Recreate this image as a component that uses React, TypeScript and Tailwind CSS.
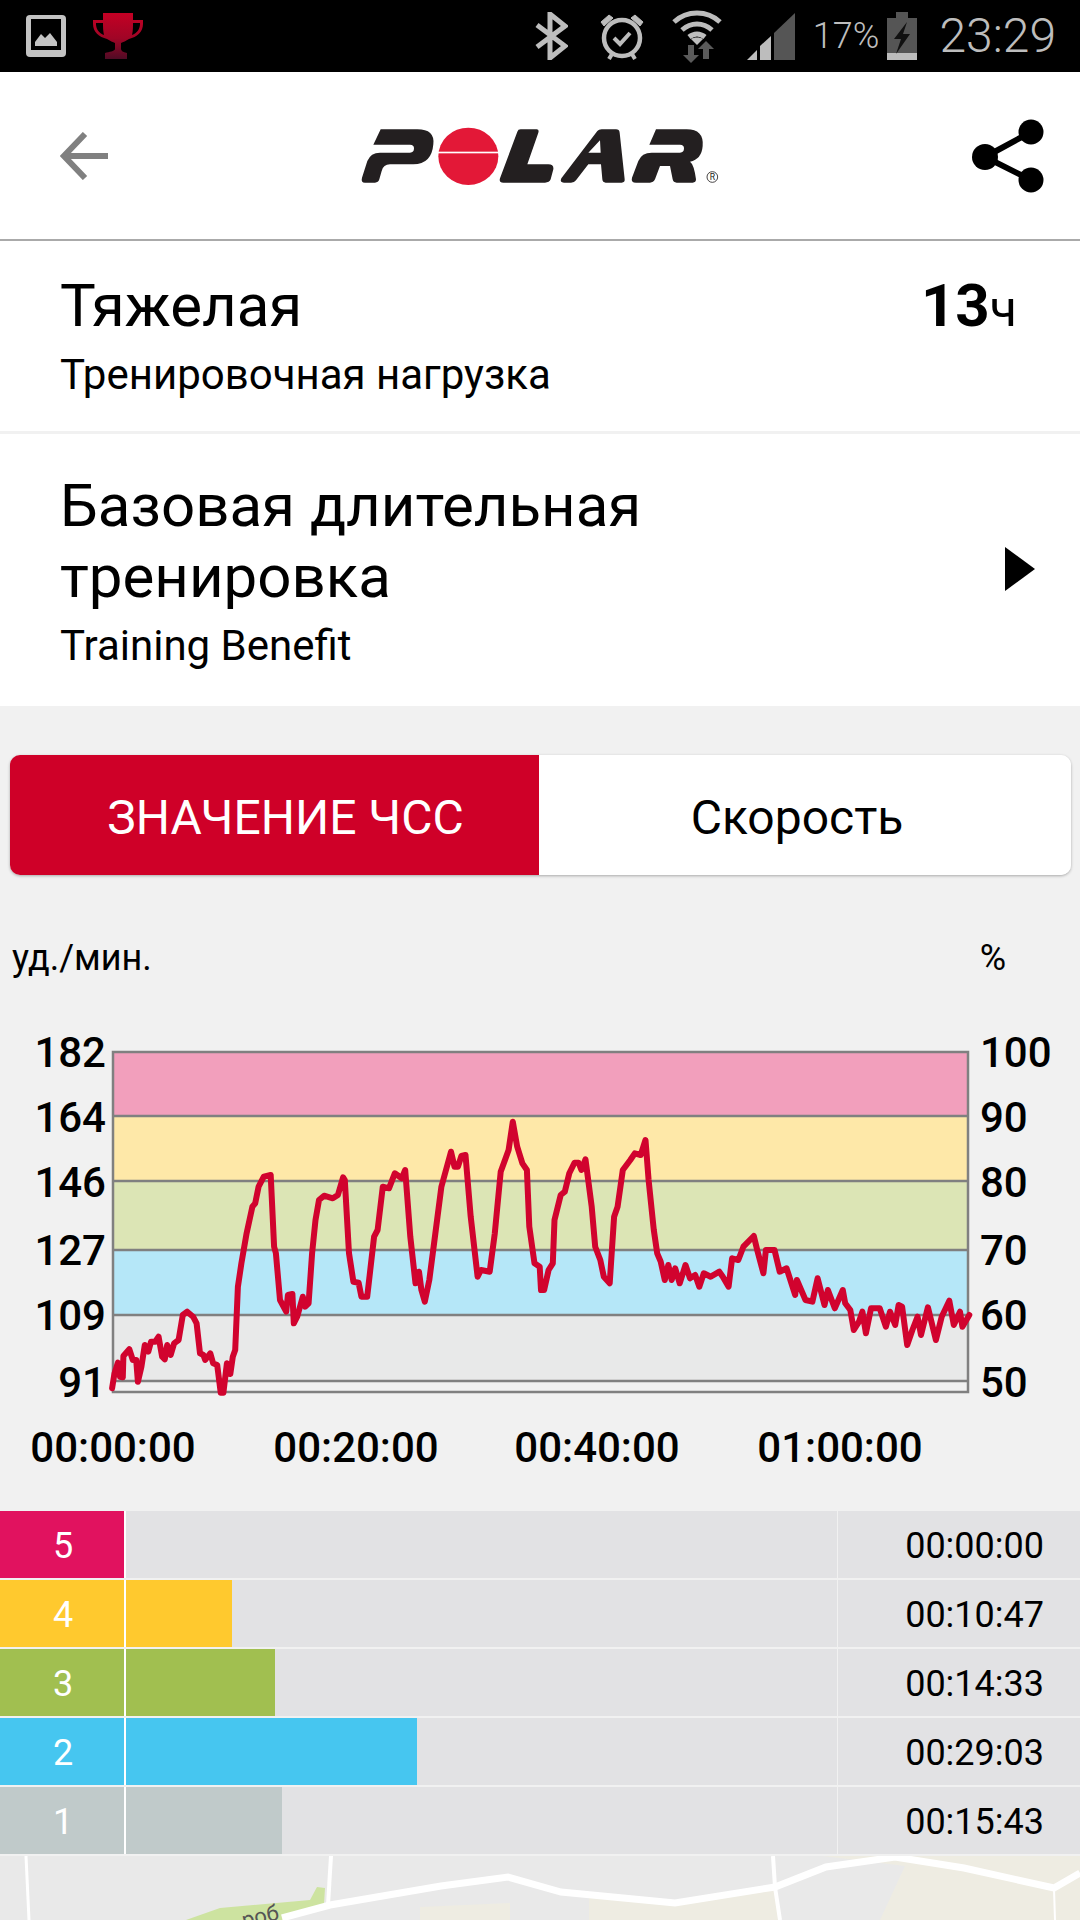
const leftTrace = [[325,1105],[332,1060],[342,1028],[348,1070],[356,1072],[358,1008],[375,988],[385,1020],[395,1020],[400,1085],[410,1040],[420,975],[430,995],[438,965],[450,965],[460,950],[470,1010],[478,1018],[485,975],[495,1005],[505,970],[518,960],[530,885],[543,875],[560,890],[570,910],[580,1000],[590,1005],[595,1020],[610,1000],[618,1030],[630,1035],[640,1118],[648,1118],[658,1030],[668,1062],[675,1010],[682,990],[690,800],[700,730],[715,640],[732,560],[740,550],[750,500],[765,470],[785,465],[795,680],[800,700],[812,840],[830,875],[835,825],[848,822],[852,910],[862,890],[878,830],[885,860],[895,850],[905,700],[915,600],[925,540],[940,527],[965,535],[980,525],[995,472],[1000,480],[1012,700],[1025,785],[1040,788],[1048,830],[1065,830],[1085,650],[1095,630],[1110,500],[1128,505],[1145,460],[1165,475],[1175,450],[1190,650],[1205,790],[1215,755],[1222,810],[1232,845],[1245,780],[1260,660],[1280,500],[1308,395],[1318,440],[1328,440],[1338,408],[1350,405],[1365,590],[1385,770],[1395,750],[1420,755],[1435,640],[1452,455],[1475,390],[1487,305],[1500,380],[1515,430],[1528,450],[1535,620],[1550,730],[1565,740]];
const rightTrace = [[3,810],[12,810],[25,750],[37,730],[42,600],[60,525],[72,515],[85,460],[100,428],[112,428],[120,450],[132,418],[150,560],[160,680],[175,720],[185,770],[202,790],[215,590],[225,560],[240,450],[262,420],[275,400],[292,405],[306,360],[315,480],[330,630],[340,700],[350,725],[362,780],[372,735],[382,780],[392,745],[405,790],[422,735],[435,775],[450,765],[462,800],[475,760],[495,770],[520,755],[530,770],[547,800],[557,715],[575,720],[590,680],[620,648],[630,690],[648,760],[655,690],[680,690],[695,755],[715,745],[740,825],[745,780],[770,840],[790,845],[805,775],[825,855],[835,810],[855,865],[878,810],[885,850],[900,870],[910,930],[925,905],[935,875],[945,940],[960,865],[985,865],[1003,920],[1015,875],[1030,915],[1040,855],[1050,860],[1065,975],[1080,930],[1095,890],[1105,945],[1125,862],[1148,960],[1165,890],[1187,842],[1200,915],[1218,875],[1225,920],[1245,885]];

const hrLine = [
  ...leftTrace.map(([x, y]) => `${(x / 2.9).toFixed(1)},${(y / 3).toFixed(1)}`),
  ...rightTrace.map(([x, y]) => `${(540 + x / 2.9).toFixed(1)},${(y / 3).toFixed(1)}`),
].join(" ");

const bands = [
  { y: 32, h: 64, fill: "#f29fbc" },
  { y: 96, h: 65, fill: "#fee8a8" },
  { y: 161, h: 69, fill: "#dce5b5" },
  { y: 230, h: 65, fill: "#b5e7f8" },
  { y: 295, h: 66, fill: "#e8e9e9" },
];
const gridLines = [96, 161, 230, 295, 361];
const bpm = [["182", 32], ["164", 97], ["146", 162], ["127", 230], ["109", 295], ["91", 362]] as const;
const pct = [["100", 32], ["90", 97], ["80", 162], ["70", 230], ["60", 295], ["50", 362]] as const;
const times = [["00:00:00", 113], ["00:20:00", 356], ["00:40:00", 597], ["01:00:00", 840]] as const;

const zones = [
  { n: 5, color: "bg-[#e1125f]", bar: "w-0", time: "00:00:00" },
  { n: 4, color: "bg-[#ffc92e]", bar: "w-[106px]", time: "00:10:47" },
  { n: 3, color: "bg-[#a1bf50]", bar: "w-[149px]", time: "00:14:33" },
  { n: 2, color: "bg-[#46c6f0]", bar: "w-[291px]", time: "00:29:03" },
  { n: 1, color: "bg-[#c0caca]", bar: "w-[156px]", time: "00:15:43" },
];

function StatusIcons() {
  return (
    <div className="flex h-[72px] items-center bg-black pl-[26px] pr-[24px]">
      {/* gallery notification */}
      <svg width="40" height="42" viewBox="0 0 40 42">
        <rect width="40" height="42" rx="4" fill="#c3c3c3" />
        <rect x="5" y="4" width="30" height="31" fill="#000" />
        <path d="M9 31V27L15 19L19 23L24 18L31 27V31Z" fill="#c3c3c3" />
      </svg>
      {/* trophy */}
      <svg className="ml-[27px]" width="50" height="46" viewBox="0 0 50 46">
        <defs>
          <linearGradient id="cup" x1="0" y1="0" x2="0" y2="1">
            <stop offset="0" stopColor="#c40024" />
            <stop offset="0.55" stopColor="#a00526" />
            <stop offset="1" stopColor="#4f0b25" />
          </linearGradient>
        </defs>
        <path
          fill="url(#cup)"
          d="M10 0H40V7H50V11C50 19 44 24 36 26C33 28 30 29 28 30V36C28 38 30 39 34 40V46H12V40C16 39 22 38 22 36V30C20 29 17 28 14 26C6 24 0 19 0 11V7H10ZM3 10V11C3 16 6 20 11 22C10 18 10 14 10 10ZM47 10H40C40 14 40 18 39 22C44 20 47 16 47 11Z"
        />
      </svg>
      <div className="flex-1" />
      {/* bluetooth */}
      <svg width="33" height="48" viewBox="0 0 33 48" fill="none" stroke="#bdbdbd" strokeWidth="5">
        <path d="M2 13L30 34L15 46V2L30 14L2 35" />
      </svg>
      {/* alarm */}
      <svg className="ml-[31px]" width="46" height="48" viewBox="0 0 46 48" fill="none" stroke="#bdbdbd">
        <circle cx="23" cy="26" r="18" strokeWidth="4.5" />
        <path d="M15 26L21 32L31 21" strokeWidth="4" />
        <path d="M2 10L10 3L14 6L5 14ZM44 10L36 3L32 6L41 14Z" fill="#bdbdbd" strokeWidth="1" />
        <path d="M10 47L13 42M36 47L33 42" strokeWidth="4" />
      </svg>
      {/* wifi with data arrows */}
      <svg className="ml-[27px]" width="50" height="54" viewBox="0 0 50 54">
        <g fill="none" stroke="#bdbdbd" strokeWidth="5">
          <path d="M2 13C15 1 35 1 48 13" />
          <path d="M10 21C19 13 31 13 40 21" />
          <path d="M17 28C22 24 28 24 33 28" />
        </g>
        <path d="M25 36L19 30C22 28 28 28 31 30Z" fill="#bdbdbd" />
        <path d="M16 36H22V46H27L19 54L11 46H16Z" fill="#5a5a5a" />
        <path d="M31 50H37V40H42L34 32L26 40H31Z" fill="#5a5a5a" />
      </svg>
      {/* signal */}
      <svg className="ml-[25px]" width="48" height="47" viewBox="0 0 48 47">
        <path d="M0 47L10 37V47Z" fill="#bdbdbd" />
        <path d="M13 47V33L24 23V47Z" fill="#bdbdbd" />
        <path d="M27 47V20L48 0V47Z" fill="#555" />
      </svg>
      <span className="ml-[18px] text-[36px] font-light leading-none text-[#bdbdbd]">17%</span>
      {/* battery */}
      <svg className="ml-[8px]" width="30" height="48" viewBox="0 0 30 48">
        <rect x="9" y="0" width="12" height="6" fill="#555" />
        <rect x="0" y="6" width="30" height="35" fill="#555" />
        <rect x="0" y="41" width="30" height="7" fill="#bdbdbd" />
        <path d="M20 10L7 27H14L9 42L23 22H16Z" fill="#111" />
      </svg>
      <span className="ml-[22px] text-[48px] font-light leading-none text-[#bdbdbd]">23:29</span>
    </div>
  );
}

function PolarLogo() {
  return (
    <svg width="400" height="90" viewBox="0 0 1200 270">
      <g fill="#231f20" fillRule="evenodd">
        <path d="M122 55H232Q285 55 280 100Q275 160 220 160H150Q130 160 125 180L118 205Q115 215 105 215H75Q62 215 66 200L82 150Q92 125 120 125H210Q222 125 222 112Q222 101 210 101H100Z" />
        <path d="M532 62Q534 55 542 55H590Q598 55 595 65L562 160H625Q642 160 640 175L632 205Q628 215 615 215H490Q476 215 480 202Z" />
        <path d="M772 60Q776 55 785 55H828Q838 55 839 65L854 205Q855 215 845 215H797Q788 215 787 205L783 160H745L708 208Q703 215 693 215H672Q658 215 664 202ZM745 125H782L780 88Z" />
        <path d="M948 55H1040Q1092 55 1088 105Q1085 145 1050 152Q1062 160 1068 205Q1068 215 1058 215H1010Q1000 215 998 205L990 165H960L945 205Q940 215 930 215H888Q872 215 876 200L895 150Q905 125 935 125H1020Q1032 125 1032 112Q1032 101 1020 101H928Z" />
      </g>
      <ellipse cx="385" cy="136" rx="90" ry="86" fill="#e31837" />
      <rect x="290" y="122" width="190" height="5" fill="#fff" />
      <circle cx="1117" cy="198" r="16" fill="none" stroke="#231f20" strokeWidth="2.5" />
      <text x="1117" y="208" textAnchor="middle" fontSize="26" fill="#231f20" fontFamily="Roboto, sans-serif">R</text>
    </svg>
  );
}

function HrChart() {
  const labelFont = "Roboto, sans-serif";
  return (
    <svg className="mt-[42px] block" width="1080" height="470" viewBox="0 0 1080 470">
      {bands.map((b) => (
        <rect key={b.y} x="113" y={b.y} width="855" height={b.h} fill={b.fill} />
      ))}
      {gridLines.map((y) => (
        <line key={y} x1="113" x2="968" y1={y} y2={y} stroke="#808080" strokeWidth="2.5" />
      ))}
      <rect x="113" y="32" width="855" height="340" fill="none" stroke="#808080" strokeWidth="2.5" />
      <polyline points={hrLine} fill="none" stroke="#d1032e" strokeWidth="6" strokeLinejoin="round" strokeLinecap="round" />
      <g fontFamily={labelFont} fontSize="42" fontWeight="500" fill="#000">
        {bpm.map(([t, y]) => (
          <text key={t} x="106" y={y + 15} textAnchor="end">{t}</text>
        ))}
        {pct.map(([t, y]) => (
          <text key={t} x="980" y={y + 15}>{t}</text>
        ))}
        {times.map(([t, x]) => (
          <text key={t} x={x} y="442" textAnchor="middle">{t}</text>
        ))}
      </g>
    </svg>
  );
}

function MapStrip() {
  return (
    <svg className="block" width="1080" height="64" viewBox="0 0 1080 64">
      <rect width="1080" height="64" fill="#e9e9e9" />
      <path d="M589 37L675 48L775 31L778 64H589Z" fill="#eeece2" />
      <path d="M420 51L510 47V64H420Z" fill="#eeece2" />
      <path d="M823 0H1080V64H880L905 10Z" fill="#eeece2" />
      <path d="M186 64L220 52L310 44L317 31L325 32L324 48L282 64Z" fill="#cde3a0" />
      <g fill="none" stroke="#fff">
        <path d="M282 62L330 49L441 30L508 21L561 36L675 47L775 31L826 11L895 1L964 12L1054 32L1080 17" strokeWidth="7" />
        <path d="M331 0L328 49" strokeWidth="4" />
        <path d="M26 0L29 64" strokeWidth="3" />
        <path d="M773 0L775 31L780 64" strokeWidth="4" />
        <path d="M1054 32L1055 64" strokeWidth="2" />
      </g>
      <text x="244" y="72" fontSize="22" fill="#555" fontFamily="Roboto, sans-serif" transform="rotate(-14 244 72)">роб</text>
    </svg>
  );
}

export default function App() {
  return (
    <div className="h-[1920px] w-[1080px] overflow-hidden bg-[#f1f1f1] font-[Roboto,sans-serif] text-black">
      <StatusIcons />

      {/* Toolbar */}
      <div className="flex h-[169px] items-center justify-between border-b-2 border-[#aaaaaa] bg-white pl-[60px] pr-[35px]">
        <svg width="48" height="48" viewBox="0 0 48 48" fill="none" stroke="#808080" strokeWidth="6">
          <path d="M48 24H4M25 2L4 24L25 46" />
        </svg>
        <PolarLogo />
        <svg width="74" height="74" viewBox="0 0 74 74" fill="#000">
          <path d="M60 13L14 38L60 61" fill="none" stroke="#000" strokeWidth="6" />
          <circle cx="60" cy="13" r="12.5" />
          <circle cx="14" cy="38" r="13" />
          <circle cx="60" cy="61" r="12.5" />
        </svg>
      </div>

      {/* Training load */}
      <div className="flex h-[190px] items-start justify-between bg-white pl-[60px] pr-[63px] pt-[31px]">
        <div>
          <div className="text-[60px] leading-[68px]">Тяжелая</div>
          <div className="mt-[12px] text-[42px] leading-[46px]">Тренировочная нагрузка</div>
        </div>
        <div className="text-[60px] font-bold leading-[68px]">
          13<span className="text-[50px] font-normal">ч</span>
        </div>
      </div>

      {/* Training benefit */}
      <div className="mt-[3px] flex h-[272px] items-start justify-between bg-white pl-[60px] pr-[45px] pt-[36px]">
        <div>
          <div className="text-[60px] leading-[71px]">
            Базовая длительная
            <br />
            тренировка
          </div>
          <div className="mt-[11px] text-[42px] leading-[46px]">Training Benefit</div>
        </div>
        <svg className="mt-[77px]" width="30" height="44" viewBox="0 0 30 44">
          <path d="M0 0L30 22L0 44Z" fill="#000" />
        </svg>
      </div>

      {/* Chart mode tabs */}
      <div className="ml-[10px] mt-[49px] flex h-[120px] w-[1061px] overflow-hidden rounded-[10px] shadow-[0_1px_3px_rgba(0,0,0,0.3)]">
        <div className="flex w-[529px] items-center justify-center bg-[#cf0028] pl-[22px] pt-[5px] text-[48px] text-white">ЗНАЧЕНИЕ ЧСС</div>
        <div className="flex flex-1 items-center justify-center bg-white pr-[16px] pt-[5px] text-[48px]">Скорость</div>
      </div>

      {/* Units */}
      <div className="mt-[63px] flex h-[40px] items-center justify-between pl-[12px] pr-[74px] text-[36px]">
        <span>уд./мин.</span>
        <span>%</span>
      </div>

      <HrChart />

      {/* Zone bars */}
      <div className="mt-[21px]">
        {zones.map((z) => (
          <div key={z.n} className="flex h-[69px] border-b-2 border-[#f1f1f1]">
            <div className={`flex w-[124px] items-center justify-center pl-[2px] pt-[2px] text-[36px] text-white ${z.color}`}>{z.n}</div>
            <div className="w-[2px] bg-white" />
            <div className="flex w-[711px] bg-[#e2e2e4]">
              <div className={`h-full ${z.bar} ${z.color}`} />
            </div>
            <div className="w-[1px] bg-[#f1f1f1]" />
            <div className="flex flex-1 items-center justify-end bg-[#e2e2e4] pr-[36px] pt-[2px] text-[36px]">{z.time}</div>
          </div>
        ))}
      </div>

      <MapStrip />
    </div>
  );
}
